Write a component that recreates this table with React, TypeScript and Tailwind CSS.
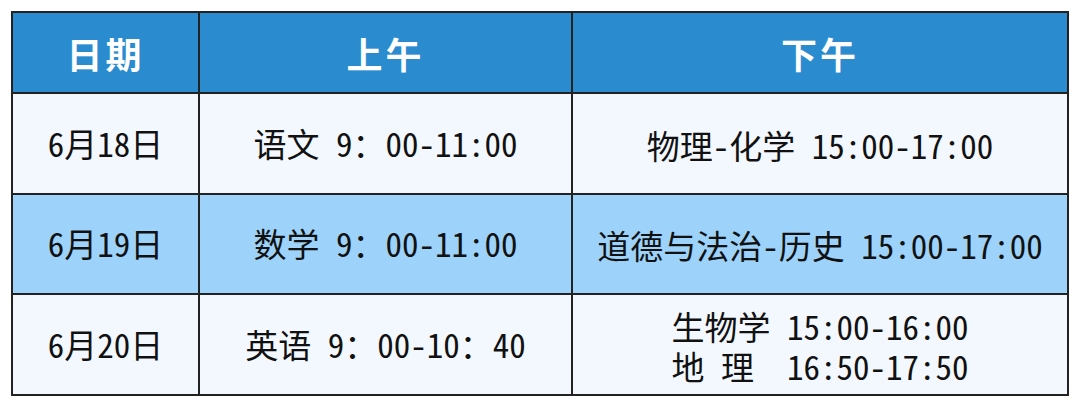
const font = { fontFamily: '"Noto Sans Mono CJK SC", "Noto Sans CJK SC", sans-serif' };

const rows = [
  { date: '6月18日', am: '语文 9：00-11:00', pm: ['物理-化学 15:00-17:00'], bg: 'bg-[#f3f8ff]' },
  { date: '6月19日', am: '数学 9：00-11:00', pm: ['道德与法治-历史 15:00-17:00'], bg: 'bg-[#9dd3fb]' },
  { date: '6月20日', am: '英语 9：00-10：40', pm: ['生物学 15:00-16:00', '地 理  16:50-17:50'], bg: 'bg-[#f3f8ff]' },
];

export default function App() {
  return (
    <div className="w-[1080px] h-[407px] bg-white pt-[11px] pl-[11px]" style={font}>
      <div className="grid w-[1058px] h-[385px] grid-cols-[185px_371px_494px] grid-rows-[79px_99px_98px_99px] gap-[2px] p-[2px] bg-[#222]">
        {['日期', '上午', '下午'].map((h) => (
          <div key={h} className="flex items-center justify-center bg-[#2b8bcf] text-white text-[36px] font-bold tracking-[3px]">
            {h}
          </div>
        ))}
        {rows.map((r) => (
          <>
            <div key={r.date + 'd'} className={`flex items-center justify-center ${r.bg} text-[#111] text-[33px]`}>
              {r.date}
            </div>
            <div key={r.date + 'a'} className={`flex items-center justify-center ${r.bg} text-[#111] text-[33px] whitespace-pre`}>
              {r.am}
            </div>
            <div key={r.date + 'p'} className={`flex items-center justify-center ${r.bg} text-[#111] text-[33px]`}>
              <div className="flex flex-col gap-[7px] leading-none pt-[3px]">
                {r.pm.map((l) => (
                  <span key={l} className="whitespace-pre">{l}</span>
                ))}
              </div>
            </div>
          </>
        ))}
      </div>
    </div>
  );
}
